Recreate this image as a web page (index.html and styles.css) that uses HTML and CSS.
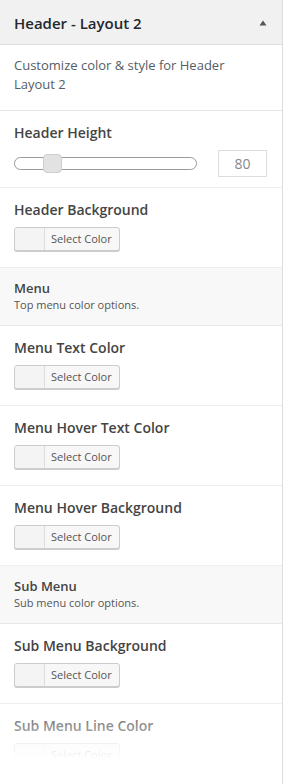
FILE: index.html
```html
<!DOCTYPE html>
<html>
<head lang="en">
    <meta charset="UTF-8">
    <title>Header - Layout 2</title>
    <link rel="stylesheet" href="styles.css">
</head>
<body>
    <div id="panel">
        <div class="panel-head">
            <h3 class="panel-title">Header - Layout 2</h3>
            <svg class="toggle" width="8" height="6" viewBox="0 0 8 6"><polygon points="4,0.5 7.5,5.5 0.5,5.5" fill="#555"/></svg>
        </div>
        <div class="panel-desc">Customize color &amp; style for Header Layout 2</div>

        <div class="control control-range">
            <span class="label">Header Height</span>
            <div class="range-row">
                <div class="track"><span class="thumb"></span></div>
                <input type="text" class="num" value="80">
            </div>
        </div>

        <div class="control">
            <span class="label">Header Background</span>
            <button class="color-btn"><span class="swatch"></span><span class="btn-text">Select Color</span></button>
        </div>

        <div class="group">
            <span class="group-title">Menu</span>
            <span class="group-desc">Top menu color options.</span>
        </div>

        <div class="control">
            <span class="label">Menu Text Color</span>
            <button class="color-btn"><span class="swatch"></span><span class="btn-text">Select Color</span></button>
        </div>
        <div class="control">
            <span class="label">Menu Hover Text Color</span>
            <button class="color-btn"><span class="swatch"></span><span class="btn-text">Select Color</span></button>
        </div>
        <div class="control">
            <span class="label">Menu Hover Background</span>
            <button class="color-btn"><span class="swatch"></span><span class="btn-text">Select Color</span></button>
        </div>

        <div class="group">
            <span class="group-title">Sub Menu</span>
            <span class="group-desc">Sub menu color options.</span>
        </div>

        <div class="control">
            <span class="label">Sub Menu Background</span>
            <button class="color-btn"><span class="swatch"></span><span class="btn-text">Select Color</span></button>
        </div>
        <div class="control">
            <span class="label">Sub Menu Line Color</span>
            <button class="color-btn"><span class="swatch"></span><span class="btn-text">Select Color</span></button>
        </div>

        <div class="fade"></div>
    </div>
</body>
</html>
```

FILE: styles.css
```css
*{
    margin: 0;
    padding: 0;
    box-sizing: border-box;
}
body{
    background: #fff;
    font-family: "Open Sans", "Liberation Sans", sans-serif;
    color: #555;
}
#panel{
    position: relative;
    width: 283px;
    height: 784px;
    overflow: hidden;
    border-right: solid 1px #dddddd;
    background: #fff;
}
.panel-head{
    height: 45px;
    display: flex;
    align-items: center;
    justify-content: space-between;
    padding: 1px 15px 0 14px;
    background: #f1f1f1;
    border-bottom: solid 1px #dddddd;
}
.panel-title{
    font-size: 15px;
    font-weight: 600;
    color: #23282d;
    line-height: 20px;
}
.toggle{
    display: block;
}
.panel-desc{
    padding: 11px 14px 16px 14px;
    font-size: 13px;
    line-height: 19px;
    color: #555d66;
    border-bottom: solid 1px #e5e5e5;
}
.control{
    display: flex;
    flex-direction: column;
    align-items: flex-start;
    gap: 7px;
    padding: 12px 14px 16px 14px;
    border-bottom: solid 1px #eeeeee;
}
.control-range{
    padding-bottom: 10px;
}
.label{
    font-size: 14px;
    font-weight: 600;
    line-height: 20px;
    color: #444;
}
.range-row{
    display: flex;
    align-items: center;
    gap: 21px;
    width: 253px;
}
.track{
    position: relative;
    width: 183px;
    height: 13px;
    border: solid 1px #9a9a9a;
    border-radius: 7px;
    background: #fff;
}
.thumb{
    position: absolute;
    left: 28px;
    top: -4px;
    width: 19px;
    height: 19px;
    background: #e2e2e2;
    border: solid 1px #cfcfcf;
    border-radius: 4px;
}
.num{
    width: 49px;
    height: 27px;
    border: solid 1px #dddddd;
    font-family: inherit;
    font-size: 14px;
    color: #888;
    text-align: center;
    background: #fff;
}
.color-btn{
    display: flex;
    height: 24px;
    border: solid 1px #cccccc;
    border-radius: 3px;
    box-shadow: 0 1px 0 #cccccc;
    background: #f7f7f7;
    font-family: inherit;
    overflow: hidden;
}
.swatch{
    width: 30px;
    height: 22px;
    border-right: solid 1px #dddddd;
    background: #f4f4f4;
}
.btn-text{
    padding: 0 7px 0 6px;
    font-size: 11px;
    line-height: 22px;
    color: #555;
}
.group{
    display: flex;
    flex-direction: column;
    gap: 1px;
    padding: 12px 14px 12px 14px;
    background: #f8f8f8;
    border-bottom: solid 1px #e8e8e8;
}
.group-title{
    font-size: 13px;
    font-weight: 600;
    line-height: 16px;
    color: #444;
}
.group-desc{
    font-size: 11px;
    line-height: 16px;
    color: #555;
}
.fade{
    position: absolute;
    left: 0;
    right: -1px;
    top: 700px;
    height: 84px;
    background: linear-gradient(to bottom, rgba(255,255,255,0) 0, rgba(255,255,255,0.4) 26px, rgba(255,255,255,0.88) 52px, #fff 59px);
}
```
